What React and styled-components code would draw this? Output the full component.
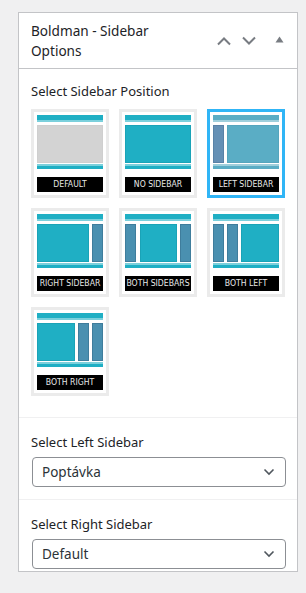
import styled, { createGlobalStyle } from "styled-components";

const GlobalStyle = createGlobalStyle`
  body {
    margin: 0;
    background: #f0f0f1;
    font-family: "Noto Sans", "Open Sans", sans-serif;
    color: #1d2327;
  }
`;

const palette = {
  normal: {
    teal: "#1fafc4",
    tealLight: "#7bd0dc",
    tealEdge: "#1aa3b7",
    side: "#4a90b0",
    sideEdge: "#3f7d9c",
  },
  faded: {
    teal: "#5aadc5",
    tealLight: "#9fcfdc",
    tealEdge: "#55a5bd",
    side: "#6590b5",
    sideEdge: "#5a82a6",
  },
};

const layouts = [
  { key: "default", label: "DEFAULT" },
  { key: "none", label: "NO SIDEBAR" },
  { key: "left", label: "LEFT SIDEBAR", selected: true },
  { key: "right", label: "RIGHT SIDEBAR" },
  { key: "both", label: "BOTH SIDEBARS" },
  { key: "bothLeft", label: "BOTH LEFT" },
  { key: "bothRight", label: "BOTH RIGHT" },
];

// blocks of the middle area: [x, width, type]
const blocks = {
  default: [[0, 66, "gray"]],
  none: [[0, 66, "main"]],
  left: [
    [0, 11, "side"],
    [14, 52, "main"],
  ],
  right: [
    [0, 52, "main"],
    [55, 11, "side"],
  ],
  both: [
    [0, 11, "side"],
    [15, 37, "main"],
    [55, 11, "side"],
  ],
  bothLeft: [
    [0, 11, "side"],
    [14, 11, "side"],
    [28, 38, "main"],
  ],
  bothRight: [
    [0, 38, "main"],
    [41, 11, "side"],
    [55, 11, "side"],
  ],
};

function LayoutDrawing({ kind, faded }) {
  const c = faded ? palette.faded : palette.normal;
  const fill = (type) => (type === "gray" ? "#d3d3d3" : type === "side" ? c.side : c.teal);
  const edge = (type) => (type === "gray" ? "#cfcfcf" : type === "side" ? c.sideEdge : c.tealEdge);
  return (
    <svg width="66" height="62" viewBox="0 0 66 62" style={{ display: "block" }}>
      <rect x="0" y="0" width="66" height="5" fill={c.teal} />
      <rect x="0" y="5" width="66" height="2" fill={c.tealLight} />
      {blocks[kind].map(([x, w, type], i) => (
        <rect
          key={i}
          x={x + 0.5}
          y="10.5"
          width={w - 1}
          height="37"
          fill={fill(type)}
          stroke={edge(type)}
        />
      ))}
      <rect x="0" y="49" width="66" height="2" fill={c.tealLight} />
      <rect x="0" y="51" width="66" height="3" fill={c.teal} />
    </svg>
  );
}

function Chevron() {
  return (
    <svg width="12" height="8" viewBox="0 0 12 8">
      <path d="M1.5 1.5 L6 6 L10.5 1.5" fill="none" stroke="#50575e" strokeWidth="1.6" />
    </svg>
  );
}

function App() {
  return (
    <>
      <GlobalStyle />
      <Page>
        <Panel>
          <Header>
            <Title>Boldman - Sidebar Options</Title>
            <Controls>
              <IconButton>
                <svg width="16" height="10" viewBox="0 0 16 10">
                  <path d="M2 8.5 L8 2.5 L14 8.5" fill="none" stroke="#787c82" strokeWidth="2" />
                </svg>
              </IconButton>
              <IconButton>
                <svg width="16" height="10" viewBox="0 0 16 10">
                  <path d="M2 1.5 L8 7.5 L14 1.5" fill="none" stroke="#787c82" strokeWidth="2" />
                </svg>
              </IconButton>
              <Toggle>
                <svg width="9" height="7" viewBox="0 0 9 7">
                  <path d="M0.5 6.5 L4.5 0.5 L8.5 6.5 Z" fill="#787c82" />
                </svg>
              </Toggle>
            </Controls>
          </Header>

          <Section $pad="13px 12px 21px">
            <Label $gap="9px">Select Sidebar Position</Label>
            <Grid>
              {layouts.map((l) => (
                <Thumb key={l.key} $selected={l.selected}>
                  <LayoutDrawing kind={l.key} faded={l.selected} />
                  <ThumbLabel>{l.label}</ThumbLabel>
                </Thumb>
              ))}
            </Grid>
          </Section>

          <Section $pad="15px 12px 12px">
            <Label $gap="6px">Select Left Sidebar</Label>
            <SelectBox>
              <span>Poptávka</span>
              <Chevron />
            </SelectBox>
          </Section>

          <Section $pad="15px 12px 2px" $last>
            <Label $gap="6px">Select Right Sidebar</Label>
            <SelectBox>
              <span>Default</span>
              <Chevron />
            </SelectBox>
          </Section>
        </Panel>
      </Page>
    </>
  );
}

export default App;

const Page = styled.div`
  padding: 12px 9px 0 18px;
`;

const Panel = styled.div`
  width: 278px;
  background: #fff;
  border: 1px solid #c3c4c7;
`;

const Header = styled.div`
  display: flex;
  align-items: center;
  justify-content: space-between;
  height: 55px;
  padding: 0 12px;
  border-bottom: 1px solid #c3c4c7;
`;

const Title = styled.h2`
  margin: 0;
  width: 150px;
  font-size: 13.6px;
  font-weight: 400;
  line-height: 20px;
`;

const Controls = styled.div`
  display: flex;
  align-items: center;
  gap: 9px;
  margin-right: 1px;
`;

const IconButton = styled.span`
  display: flex;
  width: 16px;
  height: 10px;
`;

const Toggle = styled.span`
  display: flex;
  margin-left: 9px;
  margin-top: -2px;
`;

const Section = styled.div`
  padding: ${(p) => p.$pad};
  border-bottom: ${(p) => (p.$last ? "none" : "1px solid #f0f0f1")};
`;

const Label = styled.div`
  font-size: 13px;
  line-height: 18px;
  margin-bottom: ${(p) => p.$gap};
`;

const Grid = styled.div`
  display: grid;
  grid-template-columns: repeat(3, 78px);
  column-gap: 10px;
  row-gap: 10px;
`;

const Thumb = styled.div`
  width: 78px;
  height: 89px;
  box-sizing: border-box;
  padding: 3px;
  background: #fff;
  border: 3px solid ${(p) => (p.$selected ? "#30b5f6" : "#ebebeb")};
`;

const ThumbLabel = styled.div`
  height: 15px;
  background: #000;
  color: #e8e8e8;
  font-family: "DejaVu Sans Condensed", "DejaVu Sans", sans-serif;
  font-size: 8.6px;
  line-height: 15px;
  text-align: center;
  white-space: nowrap;
  overflow: hidden;
`;

const SelectBox = styled.div`
  display: flex;
  align-items: center;
  justify-content: space-between;
  height: 30px;
  box-sizing: border-box;
  margin-left: 1px;
  width: 254px;
  padding: 0 10px 0 9px;
  border: 1px solid #8c8f94;
  border-radius: 4px;
  font-size: 13.5px;
  color: #2c3338;
`;
